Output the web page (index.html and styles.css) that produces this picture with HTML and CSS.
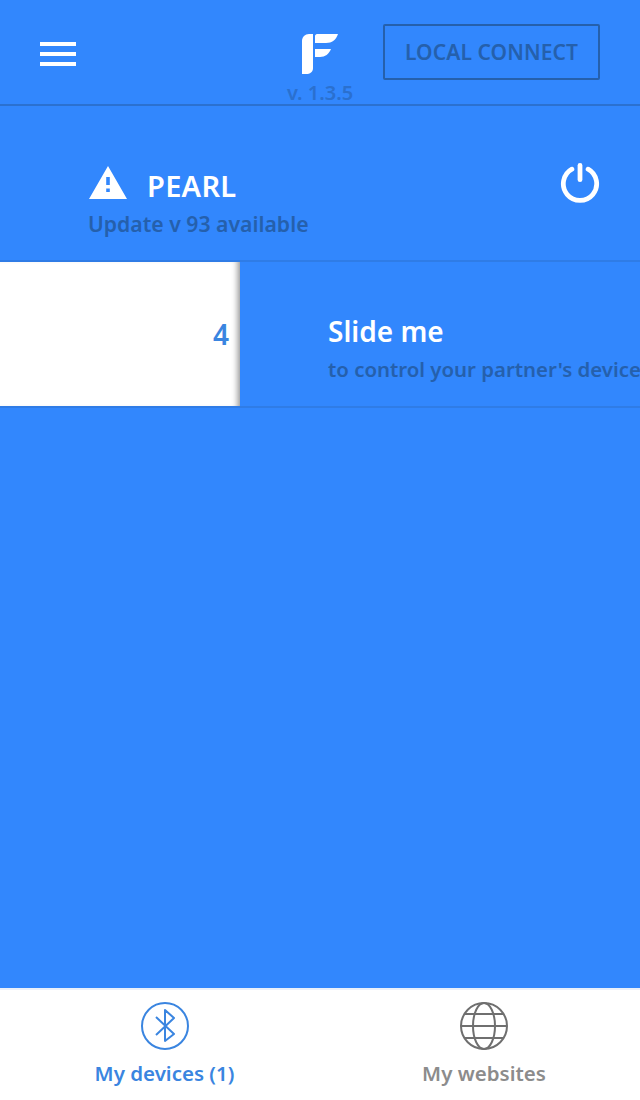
FILE: index.html
```html
<!DOCTYPE html>
<html lang="en" dir="ltr">

	<head>

		<meta charset="utf-8">

		<title>Devices</title>

		<link rel="stylesheet" href="styles.css">

	</head>

	<body>

		<div id="app">

			<header class="topbar">

				<div class="menu">
					<span></span>
					<span></span>
					<span></span>
				</div>

				<div class="brand">
					<svg class="logo" width="36" height="40" viewBox="0 0 36 40">
						<path d="M0 7 C0 3 3 0 7 0 H11 V34 C11 38 8 40 4 40 H0 Z" fill="#ffffff"/>
						<path d="M13 2 C13 1 14 0 15 0 H36 C34 6 30 9 24 9 H13 Z" fill="#ffffff"/>
						<path d="M13 15 H29 C27 20 23 23 18 23 H13 Z" fill="#ffffff"/>
					</svg>
					<div class="version">v. 1.3.5</div>
				</div>

				<button class="connect">LOCAL CONNECT</button>

			</header>

			<section class="device">

				<div class="device-info">

					<div class="device-name">
						<svg class="warning" width="38" height="33" viewBox="0 0 38 33">
							<path fill-rule="evenodd" fill="#ffffff" d="M19 0 L38 33 H0 Z M17.2 11 V19 H20.8 V11 Z M17.2 22.5 V26 H20.8 V22.5 Z"/>
						</svg>
						<span>PEARL</span>
					</div>

					<div class="device-update">Update v 93 available</div>

				</div>

				<svg class="power" width="40" height="40" viewBox="0 0 42 42">
					<path d="M12.5 6.5 A17.5 17.5 0 1 0 29.5 6.5" fill="none" stroke="#ffffff" stroke-width="5" stroke-linecap="round"/>
					<path d="M21 2.5 V17.5" fill="none" stroke="#ffffff" stroke-width="5" stroke-linecap="round"/>
				</svg>

			</section>

			<section class="slider">

				<div class="slider-handle">4</div>

				<div class="slider-text">
					<div class="slider-title">Slide me</div>
					<div class="slider-sub">to control your partner's device</div>
				</div>

			</section>

			<div class="spacer"></div>

			<nav class="tabs">

				<div class="tab tab-active">
					<svg width="50" height="50" viewBox="0 0 50 50" fill="none" stroke="#3a85e0" stroke-width="2">
						<circle cx="25" cy="25" r="23"/>
						<path d="M16 16 L34 33 L25 40 V9 L34 17 L16 34" stroke-linejoin="round"/>
					</svg>
					<div class="tab-label">My devices (1)</div>
				</div>

				<div class="tab">
					<svg width="50" height="50" viewBox="0 0 50 50" fill="none" stroke="#6f6f6f" stroke-width="2">
						<circle cx="25" cy="25" r="23"/>
						<ellipse cx="25" cy="25" rx="11" ry="23"/>
						<path d="M5 13 H45 M2 25 H48 M5 37 H45"/>
					</svg>
					<div class="tab-label">My websites</div>
				</div>

			</nav>

		</div>

	</body>

</html>
```

FILE: styles.css
```css
html, body {

	margin: 0;

	width: 100%;
	height: 100%;

	font-family: "Noto Sans", sans-serif;

}

#app {

	height: 1100px;

	display: flex;
	flex-direction: column;

	overflow: hidden;

	background-color: #3287fd;

}

.topbar {

	box-sizing: border-box;

	height: 106px;
	padding: 24px 40px 0;

	display: grid;
	grid-template-columns: 1fr auto 1fr;
	align-items: start;

	border-bottom: 2px solid #2b71d0;

}

.menu {

	margin-top: 18px;

	display: flex;
	flex-direction: column;
	gap: 6px;

}

.menu span {

	display: block;

	width: 36px;
	height: 4px;

	background-color: #ffffff;

}

.brand {

	padding-top: 10px;

	display: flex;
	flex-direction: column;
	align-items: center;

}

.logo {

	display: block;

}

.version {

	margin-top: 5px;

	font-size: 20px;
	line-height: 28px;
	font-weight: 600;
	white-space: nowrap;

	color: #2a70cf;

}

.connect {

	justify-self: end;

	box-sizing: border-box;

	width: 217px;
	height: 56px;
	padding: 0;

	background: transparent;
	border: 2px solid #2560ac;
	border-radius: 2px;

	font-family: "Noto Sans", sans-serif;
	font-size: 21px;
	font-weight: 600;
	letter-spacing: 0.1px;

	color: #2560ac;

}

.device {

	box-sizing: border-box;

	height: 156px;
	padding: 56px 40px 0 88px;

	display: flex;
	justify-content: space-between;
	align-items: flex-start;

	border-bottom: 2px solid #2f7ce6;

}

.device-name {

	height: 44px;
	padding-top: 1px;

	display: flex;
	align-items: center;
	gap: 20px;

	font-size: 29px;
	font-weight: 600;
	letter-spacing: 0.3px;

	color: #ffffff;

}

.warning {

	margin: -6px 0 0 1px;

}

.device-update {

	margin-top: 2px;

	font-size: 21.2px;
	line-height: 30px;
	font-weight: 600;

	color: #2560ac;

}

.power {

	margin-top: 1px;

}

.slider {

	box-sizing: border-box;

	height: 146px;

	display: flex;

	border-bottom: 2px solid #2f7ce6;

}

.slider-handle {

	flex: 0 0 240px;

	box-sizing: border-box;
	padding: 0 11px 0 0;

	display: flex;
	justify-content: flex-end;
	align-items: center;

	background-color: #ffffff;
	box-shadow: inset -7px 0 6px -5px rgba( 0, 0, 0, 0.45 );

	font-size: 28px;
	font-weight: 600;

	color: #3a85e0;

}

.slider-text {

	padding: 49px 0 0 88px;

	white-space: nowrap;

}

.slider-title {

	font-size: 28px;
	line-height: 40px;
	font-weight: 600;

	color: #ffffff;

}

.slider-sub {

	font-size: 20.4px;
	line-height: 36px;
	font-weight: 600;

	color: #2560ac;

}

.spacer {

	flex: 1;

}

.tabs {

	box-sizing: border-box;

	height: 112px;
	padding-top: 11px;

	display: grid;
	grid-template-columns: 329px 310px;

	background-color: #ffffff;
	border-top: 2px solid #eaf1fb;

}

.tab {

	display: flex;
	flex-direction: column;
	align-items: center;
	gap: 7px;

	font-size: 20.5px;
	font-weight: 600;

	color: #8c8c8c;

}

.tab svg {

	display: block;

}

.tab-active {

	color: #3a85e0;

}

.tab-label {

	line-height: 30px;

}
```
